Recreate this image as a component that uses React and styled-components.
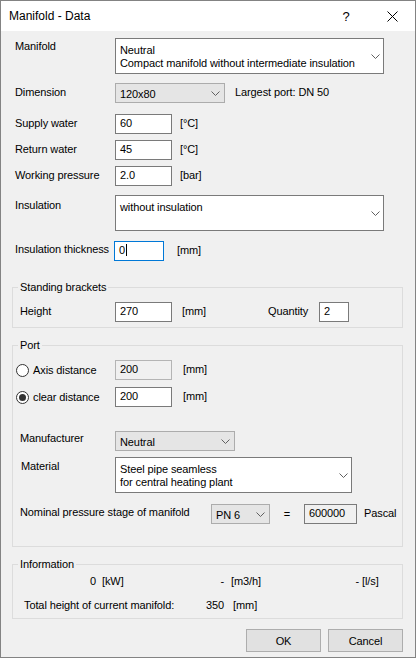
import React from 'react'
import styled, { createGlobalStyle } from 'styled-components'

const GlobalStyle = createGlobalStyle`
  html, body {
    margin: 0;
    padding: 0;
    background: #ffffff;
  }
  body {
    font-family: "Liberation Sans", Arial, sans-serif;
    font-size: 11px;
    color: #000;
  }
  * {
    box-sizing: border-box;
  }
`

const Chevron = ({ mr = 4 }) => (
  <ChevronSvg $mr={mr} width="9" height="5" viewBox="0 0 9 5">
    <polyline points="0.5,0.5 4.5,4.5 8.5,0.5" fill="none" stroke="#606060" strokeWidth="1" />
  </ChevronSvg>
)

const App = () => {
  return (
    <>
      <GlobalStyle />
      <Window>
        <TitleBar>
          <Title>Manifold - Data</Title>
          <TitleButton>?</TitleButton>
          <TitleButton>
            <svg width="11" height="11" viewBox="0 0 11 11">
              <path d="M0.5 0.5 L10.5 10.5 M10.5 0.5 L0.5 10.5" stroke="#000" strokeWidth="1" fill="none" />
            </svg>
          </TitleButton>
        </TitleBar>

        <Body>
          <Row $mt={7}>
            <Label $w={103} $pl={3} $pt={2}>Manifold</Label>
            <Combo $w={269} $h={36} $white>
              <ComboText $pt={5}>
                Neutral<br />Compact manifold without intermediate insulation
              </ComboText>
              <Chevron mr={3} />
            </Combo>
          </Row>

          <Row $mt={9}>
            <Label $w={103} $pl={3}>Dimension</Label>
            <Combo $w={110}>
              <ComboText>120x80</ComboText>
              <Chevron />
            </Combo>
            <Unit $ml={10}>Largest port: DN 50</Unit>
          </Row>

          <Row $mt={11}>
            <Label $w={103} $pl={3}>Supply water</Label>
            <TextBox $w={57}>60</TextBox>
            <Unit $ml={8}>[°C]</Unit>
          </Row>

          <Row $mt={6}>
            <Label $w={103} $pl={3}>Return water</Label>
            <TextBox $w={57}>45</TextBox>
            <Unit $ml={8}>[°C]</Unit>
          </Row>

          <Row $mt={6}>
            <Label $w={103} $pl={3}>Working pressure</Label>
            <TextBox $w={57}>2.0</TextBox>
            <Unit $ml={8}>[bar]</Unit>
          </Row>

          <Row $mt={9}>
            <Label $w={103} $pl={3} $pt={4}>Insulation</Label>
            <Combo $w={269} $h={36} $white>
              <ComboText $pt={5}>without insulation</ComboText>
              <Chevron mr={3} />
            </Combo>
          </Row>

          <Row $mt={10}>
            <Label $w={102} $pl={3} $pt={2}>Insulation thickness</Label>
            <TextBox $w={50} $focus>0<Caret /></TextBox>
            <Unit $ml={13}>[mm]</Unit>
          </Row>

          <Group $mt={20} $pb={5}>
            <Legend>Standing brackets</Legend>
            <Row $mt={8}>
              <Label $w={102} $pl={7}>Height</Label>
              <TextBox $w={57}>270</TextBox>
              <Unit $ml={10} $w={86}>[mm]</Unit>
              <Label $w={51} $pl={0}>Quantity</Label>
              <TextBox $w={30}>2</TextBox>
            </Row>
          </Group>

          <Group $mt={11} $pb={22}>
            <Legend>Port</Legend>
            <Row $mt={8}>
              <RadioLabel>
                <Radio />
                Axis distance
              </RadioLabel>
              <TextBox $w={57} $disabled>200</TextBox>
              <Unit $ml={11}>[mm]</Unit>
            </Row>
            <Row $mt={7}>
              <RadioLabel>
                <Radio $checked />
                clear distance
              </RadioLabel>
              <TextBox $w={57}>200</TextBox>
              <Unit $ml={11}>[mm]</Unit>
            </Row>

            <Row $mt={24}>
              <Label $w={102} $pl={7} $pt={1}>Manufacturer</Label>
              <Combo $w={120}>
                <ComboText>Neutral</ComboText>
                <Chevron />
              </Combo>
            </Row>

            <Row $mt={6}>
              <Label $w={102} $pl={8} $pt={3}>Material</Label>
              <Combo $w={237} $h={36} $white>
                <ComboText $pt={5}>
                  Steel pipe seamless<br />for central heating plant
                </ComboText>
                <Chevron mr={3} />
              </Combo>
            </Row>

            <Row $mt={11}>
              <Label $w={198} $pl={7} $pt={2}>Nominal pressure stage of manifold</Label>
              <Combo $w={59}>
                <ComboText>PN 6</ComboText>
                <Chevron />
              </Combo>
              <Equals>=</Equals>
              <TextBox $w={53} $readonly>600000</TextBox>
              <Unit $ml={7}>Pascal</Unit>
            </Row>
          </Group>

          <Group $mt={11} $pb={6}>
            <Legend>Information</Legend>
            <InfoRow $mt={4} $pl={7}>
              <InfoValue $w={76}>0</InfoValue>
              <InfoUnit $w={68} $pl={6}>[kW]</InfoUnit>
              <InfoValue $w={60}>-</InfoValue>
              <InfoUnit $w={75} $pl={7}>[m3/h]</InfoUnit>
              <InfoValue $w={60}>-</InfoValue>
              <InfoUnit $pl={3}>[l/s]</InfoUnit>
            </InfoRow>
            <InfoRow $mt={11} $pl={11}>
              <InfoUnit $w={182}>Total height of current manifold:</InfoUnit>
              <InfoUnit>350</InfoUnit>
              <InfoUnit $pl={9}>[mm]</InfoUnit>
            </InfoRow>
          </Group>

          <ButtonBar>
            <Button>OK</Button>
            <Button>Cancel</Button>
          </ButtonBar>
        </Body>
      </Window>
    </>
  )
}

const Window = styled.div`
  width: 416px;
  height: 658px;
  border: 1px solid #838383;
  background: #f0f0f0;
  display: flex;
  flex-direction: column;
  overflow: hidden;
`
const TitleBar = styled.div`
  height: 30px;
  flex: none;
  background: #ffffff;
  display: flex;
  align-items: center;
`
const Title = styled.div`
  flex: 1;
  padding-left: 8px;
  font-size: 12px;
  padding-bottom: 1px;
`
const TitleButton = styled.div`
  width: 46px;
  height: 30px;
  display: flex;
  align-items: center;
  justify-content: center;
  font-size: 13px;
`
const Body = styled.div`
  flex: 1;
  padding: 0 12px 0 11px;
  display: flex;
  flex-direction: column;
  letter-spacing: -0.1px;
`
const Row = styled.div`
  display: flex;
  align-items: flex-start;
  margin-top: ${p => p.$mt || 0}px;
  line-height: 13px;
`
const Label = styled.div`
  flex: none;
  width: ${p => p.$w}px;
  padding-left: ${p => p.$pl}px;
  padding-top: ${p => p.$pt ?? 3}px;
  white-space: nowrap;
`
const Unit = styled.div`
  flex: none;
  margin-left: ${p => p.$ml || 0}px;
  width: ${p => (p.$w ? `${p.$w}px` : 'auto')};
  padding-top: 3px;
  white-space: nowrap;
`
const TextBox = styled.div`
  flex: none;
  width: ${p => p.$w}px;
  height: 20px;
  padding: 2px 4px 0;
  line-height: 13px;
  white-space: nowrap;
  background: ${p => (p.$disabled || p.$readonly ? '#f0f0f0' : '#ffffff')};
  border: 1px solid ${p => (p.$focus ? '#0078d7' : p.$disabled ? '#b4b4b4' : '#7a7a7a')};
`
const Caret = styled.span`
  display: inline-block;
  width: 1px;
  height: 12px;
  margin-left: 1px;
  background: #000;
  vertical-align: -2px;
`
const Combo = styled.div`
  flex: none;
  width: ${p => p.$w}px;
  height: ${p => p.$h || 20}px;
  display: flex;
  align-items: center;
  justify-content: space-between;
  padding-left: 4px;
  background: ${p => (p.$white ? '#ffffff' : '#e5e5e5')};
  border: 1px solid ${p => (p.$white ? '#7a7a7a' : '#acacac')};
`
const ComboText = styled.div`
  align-self: flex-start;
  padding-top: ${p => p.$pt ?? 4}px;
  line-height: 13px;
  white-space: nowrap;
`
const ChevronSvg = styled.svg`
  flex: none;
  margin-right: ${p => p.$mr}px;
`
const Group = styled.fieldset`
  margin: ${p => p.$mt}px 0 0;
  padding: 0 0 ${p => p.$pb}px;
  border: 1px solid #dcdcdc;
  min-width: 0;
`
const Legend = styled.legend`
  margin-left: 5px;
  padding: 0 2px;
  line-height: 13px;
`
const RadioLabel = styled.div`
  flex: none;
  width: 102px;
  height: 20px;
  padding-left: 3px;
  display: flex;
  align-items: center;
  gap: 4px;
  white-space: nowrap;
`
const Radio = styled.span`
  width: 13px;
  height: 13px;
  flex: none;
  border-radius: 50%;
  border: 1px solid #333333;
  background: #ffffff;
  display: flex;
  align-items: center;
  justify-content: center;
  &::after {
    content: '';
    display: ${p => (p.$checked ? 'block' : 'none')};
    width: 7px;
    height: 7px;
    border-radius: 50%;
    background: #333333;
  }
`
const Equals = styled.div`
  flex: none;
  width: 34px;
  text-align: center;
  padding-top: 4px;
`
const InfoRow = styled.div`
  display: flex;
  margin-top: ${p => p.$mt}px;
  padding-left: ${p => p.$pl}px;
  line-height: 13px;
`
const InfoValue = styled.div`
  flex: none;
  width: ${p => p.$w}px;
  text-align: right;
`
const InfoUnit = styled.div`
  flex: none;
  width: ${p => (p.$w ? `${p.$w}px` : 'auto')};
  padding-left: ${p => p.$pl || 0}px;
  white-space: nowrap;
`
const ButtonBar = styled.div`
  display: flex;
  justify-content: flex-end;
  gap: 7px;
  margin-top: 10px;
`
const Button = styled.div`
  width: 75px;
  height: 23px;
  display: flex;
  align-items: center;
  justify-content: center;
  background: #e1e1e1;
  border: 1px solid #adadad;
`

export default App
